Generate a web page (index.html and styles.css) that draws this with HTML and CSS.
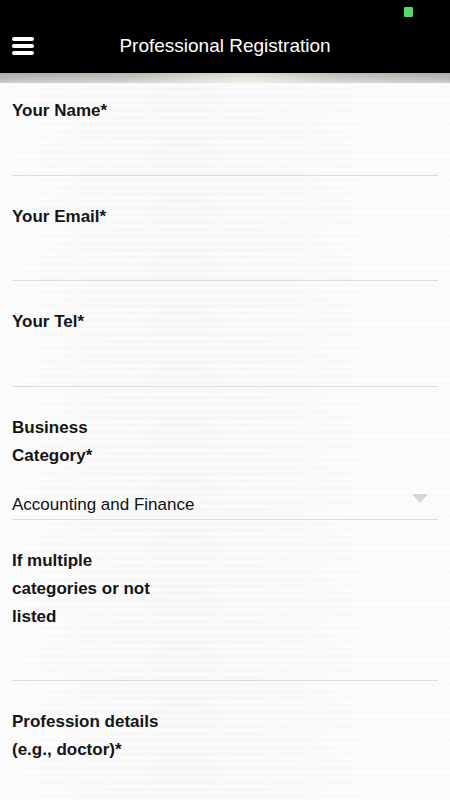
FILE: index.html
```html
<!DOCTYPE html>
<html lang="en">
<head>
  <meta charset="UTF-8">
  <meta name="viewport" content="width=device-width, initial-scale=1.0">
  <title>Professional Registration</title>
  <link rel="stylesheet" href="styles.css">
</head>
<body>
  <div class="topbar">
    <div class="status"><span class="signal"></span></div>
    <div class="nav">
      <button class="menu" aria-label="Menu">
        <span></span><span></span><span></span>
      </button>
      <h1>Professional Registration</h1>
    </div>
  </div>
  <div class="strip"></div>

  <form class="form">
    <div class="field">
      <label>Your Name*</label>
      <input type="text">
    </div>
    <div class="field">
      <label>Your Email*</label>
      <input type="email">
    </div>
    <div class="field">
      <label>Your Tel*</label>
      <input type="tel">
    </div>
    <div class="field">
      <label>Business Category*</label>
      <div class="select">
        <span>Accounting and Finance</span>
        <i class="arrow"></i>
      </div>
    </div>
    <div class="field">
      <label>If multiple categories or not listed</label>
      <input type="text">
    </div>
    <div class="field">
      <label>Profession details (e.g., doctor)*</label>
      <input type="text">
    </div>
  </form>
</body>
</html>
```

FILE: styles.css
```css
body {
  margin: 0;
  font-family: 'Liberation Sans', Arial, sans-serif;
  color: #111;
  background-color: #f7f7f7;
  background-image:
    linear-gradient(to right, rgba(255,255,255,0.5), rgba(255,255,255,0) 40%, rgba(255,255,255,0.4) 80%),
    repeating-linear-gradient(to bottom, rgba(255,255,255,0.35) 0, rgba(255,255,255,0.35) 3px, rgba(238,238,238,0.25) 5px, rgba(255,255,255,0) 7px);
}
.topbar {
  background: #000;
  height: 73px;
  position: relative;
}
.status {
  height: 26px;
}
.signal {
  position: absolute;
  top: 7px;
  left: 404px;
  width: 9px;
  height: 10px;
  border-radius: 1px;
  background: #55d86a;
}
.nav {
  display: flex;
  align-items: center;
  height: 40px;
  position: relative;
}
.menu {
  background: none;
  border: none;
  padding: 0;
  margin-left: 12px;
  width: 22px;
  display: flex;
  flex-direction: column;
  gap: 3.5px;
}
.menu span {
  display: block;
  height: 3.5px;
  background: #fff;
  border-radius: 2px;
}
.nav h1 {
  position: absolute;
  left: 0;
  right: 0;
  top: 0;
  margin: 0;
  text-align: center;
  font-weight: normal;
  font-size: 19px;
  line-height: 40px;
  color: #fff;
}
.strip {
  height: 10px;
  background:
    linear-gradient(to bottom, rgba(0,0,0,0.06), rgba(255,255,255,0.1) 60%, rgba(255,255,255,0.35)),
    linear-gradient(to right, #b7b4b0 0%, #c6c3be 30%, #ece8de 55%, #ccc8c3 75%, #b7b4b0 100%);
}
.form {
  padding: 14px 12px 0;
}
.field {
  margin-bottom: 27px;
}
.field label {
  display: block;
  width: 152px;
  font-size: 17px;
  font-weight: bold;
  line-height: 28px;
  color: #151515;
}
.field input {
  display: block;
  box-sizing: border-box;
  width: 100%;
  height: 50.5px;
  border: none;
  border-bottom: 1px solid #dcdcdc;
  background: transparent;
  font: inherit;
  outline: none;
}
.select {
  box-sizing: border-box;
  height: 50px;
  border-bottom: 1px solid #dcdcdc;
  display: flex;
  align-items: flex-end;
  justify-content: space-between;
  padding-bottom: 4px;
  position: relative;
}
.select span {
  font-size: 17px;
  color: #111;
}
.arrow {
  position: absolute;
  right: 10px;
  top: 24px;
  width: 0;
  height: 0;
  border-left: 8px solid transparent;
  border-right: 8px solid transparent;
  border-top: 9px solid #d6d6d6;
}
```
